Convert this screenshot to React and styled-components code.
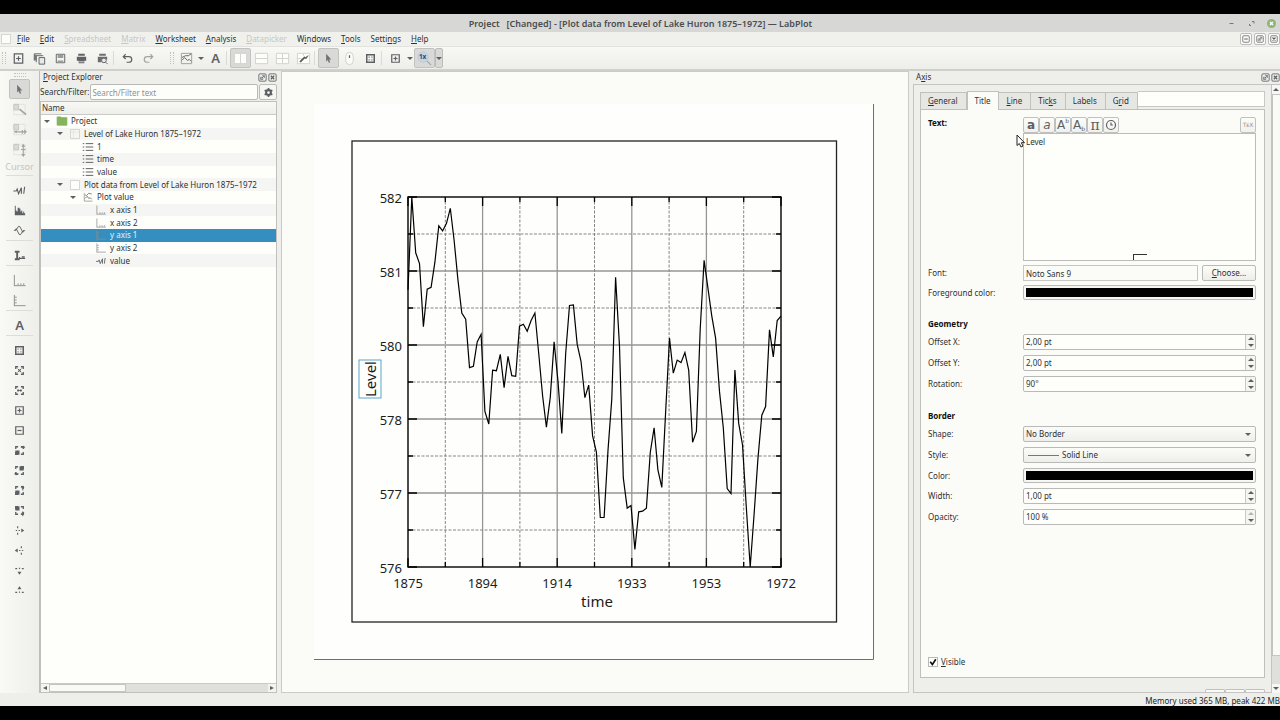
import React from 'react';
import styled, { createGlobalStyle } from 'styled-components';

const LEVELS = [
    580.38, 581.86, 580.97, 580.80, 579.79, 580.39, 580.42, 580.82, 581.40, 581.32,
    581.44, 581.68, 581.17, 580.53, 580.01, 579.91, 579.14, 579.16, 579.55, 579.67,
    578.44, 578.24, 579.10, 579.09, 579.35, 578.82, 579.32, 579.01, 579.00, 579.80,
    579.83, 579.72, 579.89, 580.01, 579.37, 578.69, 578.19, 578.67, 579.55, 578.92,
    578.09, 579.37, 580.13, 580.14, 579.51, 579.24, 578.66, 578.86, 578.05, 577.79,
    576.75, 576.75, 577.82, 578.64, 580.58, 579.48, 577.38, 576.90, 576.94, 576.24,
    576.84, 576.85, 576.90, 577.79, 578.18, 577.51, 577.23, 578.42, 579.61, 579.05,
    579.26, 579.22, 579.38, 579.10, 577.95, 578.12, 579.75, 580.85, 580.41, 579.96,
    579.61, 578.76, 578.18, 577.21, 577.13, 579.10, 578.25, 577.91, 576.89, 575.96,
    576.80, 577.68, 578.38, 578.52, 579.74, 579.31, 579.89, 579.96,
];

// the second field is the position of the mnemonic letter
const MENUS = [
    ['File', 0], ['Edit', 0], ['Spreadsheet', 0, true], ['Matrix', 0, true],
    ['Worksheet', 0], ['Analysis', 0], ['Datapicker', 0, true], ['Windows', 1],
    ['Tools', 0], ['Settings', 5], ['Help', 0],
];

const TREE = [
    { depth: 0, icon: 'folder', label: 'Project', open: true },
    { depth: 1, icon: 'sheet', label: 'Level of Lake Huron 1875–1972', open: true },
    { depth: 2, icon: 'list', label: '1' },
    { depth: 2, icon: 'list', label: 'time' },
    { depth: 2, icon: 'list', label: 'value' },
    { depth: 1, icon: 'page', label: 'Plot data from Level of Lake Huron 1875–1972', open: true },
    { depth: 2, icon: 'plot', label: 'Plot value', open: true },
    { depth: 3, icon: 'xaxis', label: 'x axis 1' },
    { depth: 3, icon: 'xaxis', label: 'x axis 2' },
    { depth: 3, icon: 'yaxis', label: 'y axis 1', selected: true },
    { depth: 3, icon: 'yaxis', label: 'y axis 2' },
    { depth: 3, icon: 'curve', label: 'value' },
];

const frame = <path d="M4 4h8v8H4z" fill="none" strokeWidth="1.300" />;
const corners = <path d="M4 6.500V4h2.500M9.500 4H12v2.500M12 9.500V12H9.500M6.500 12H4V9.500" fill="none" strokeWidth="1.400" />;
const pageFrame = <path d="M1.500 2.500h13v11h-13z" fill="#fdfefa" stroke="#d0d1ce" />;
const ghostPlot = <path d="M2 2.500h5v6H2z" fill="#d9dad7" stroke="#c4c5c2" />;
const dotFrame = <path d="M2 2.500h12v11H2z" fill="none" stroke="#cfd0cd" strokeDasharray="1 1" />;

const ICONS = {
    newDoc: <><path d="M3.500 3h9v10h-9z" fill="none" strokeWidth="1.300" /><path d="M8 5.500v5M5.500 8h5" strokeWidth="1.300" /></>,
    copies: <><path d="M2.500 10V3H10M4.500 12V5H12" fill="none" /><path d="M7.500 7h6v7h-6z" fill="#e8e9e6" /><path d="M2 4h3v6H2z" fill="#75777a" stroke="none" /></>,
    save: <><path d="M3.500 3.500h9v9h-9z" fill="none" /><path d="M5 4h6v3.500H5zM5 10h6v2.500H5z" fill="#9a9c9a" stroke="none" /></>,
    print: <><path d="M4.500 3h7v2h-7zM3 6h10v4.500H3zM5 9.500h6V13H5z" fill="#606264" stroke="none" /><path d="M5.500 11.500h5" stroke="#d8d9d6" /></>,
    preview: <><path d="M4.500 3h7v2h-7zM3 6h10v3H3zM3 9h4v3H3z" fill="#6b6d6f" stroke="none" /><circle cx="9.500" cy="10" r="2.500" fill="#e8e9e6" /><path d="M11.500 12l2 2" /></>,
    undo: <path d="M6 3.500L3.500 6 6 8.500M3.500 6H9.500a3 3 0 0 1 0 6H7" fill="none" strokeWidth="1.300" />,
    redo: <path d="M10 3.500L12.500 6 10 8.500M12.500 6H6.500a3 3 0 0 0 0 6H9" fill="none" strokeWidth="1.300" stroke="#a3a5a3" />,
    plot: <><path d="M3 2.500v11M3 13.500h11" stroke="#8c8e8c" /><path d="M4 10l3-3 2 3 2-1 2 2M4 5l2 1 3-3 4 1" fill="none" /></>,
    plotBox: <><path d="M2.500 2.500h11v11h-11z" fill="none" stroke="#9c9e9c" /><path d="M3 10l3-3 3 3 2-1 2 2M3 7l4-2h3l3-2" fill="none" /></>,
    cols: <>{pageFrame}<path d="M8 3v10" stroke="#d0d1ce" /></>,
    rows: <>{pageFrame}<path d="M2 8h12" stroke="#d0d1ce" /></>,
    grid: <>{pageFrame}<path d="M2 8h12M8 3v10" stroke="#d0d1ce" /></>,
    breakGrid: <>{pageFrame}<path d="M2 8h4M8 3v2" stroke="#d0d1ce" /><path d="M4 11l5-5 1 1 3-2-2 3-2 0-4 4z" fill="#55585a" strokeWidth=".7" /></>,
    arrow: <path d="M5.500 3l5.500 6H8.600l1.200 3-1.400.6-1.300-3-1.600 1.500z" fill="#707274" stroke="none" />,
    mouse: <><rect x="4" y="1.500" width="8" height="13" rx="4" fill="#fbfcf8" stroke="#d0d1ce" /><path d="M8 4.500v3" strokeWidth="1.300" /></>,
    fit: <><path d="M4 4h8v8H4z" fill="none" strokeWidth="1.600" /><path d="M6 6.500h1M9 6.500h1M6 9.500h1M9 9.500h1" strokeWidth="1.200" /></>,
    plus: <>{frame}<path d="M8 5.800v4.400M5.800 8h4.400" strokeWidth="1.300" /></>,
    minus: <>{frame}<path d="M5.800 8h4.400" strokeWidth="1.300" /></>,
    zoom: <><circle cx="6.500" cy="6.500" r="5.500" fill="#c4d5e6" stroke="#b5c4d2" strokeWidth=".7" /><path d="M10.500 10.500l4.500 4.500" stroke="#a5a7a5" strokeWidth="1.300" /><text x="2" y="9" fontSize="7" fontWeight="700" fill="#2b4a78" stroke="none">1x</text></>,
    ghostLine: <>{dotFrame}{ghostPlot}<path d="M8 7.500l7 6" stroke="#a2a4a2" strokeWidth="1.800" /></>,
    ghostX: <>{dotFrame}{ghostPlot}<path d="M3 10.500h12M11 8.500v4M5 9.500l-2 1 2 1M13 8.500l2 2-2 2" fill="none" stroke="#a2a4a2" strokeWidth="1.200" /></>,
    ghostY: <>{dotFrame}{ghostPlot}<path d="M12 2.500V15M9.500 8h5M10.500 5L12 3l1.500 2M10.500 13l1.500 2 1.500-2" fill="none" stroke="#a2a4a2" strokeWidth="1.200" /></>,
    curve: <path d="M1.500 8.500h3l1-2 1.500 5 3-6.500v6.500M12.500 11.500l1-7.500" fill="none" strokeWidth="1.200" />,
    histogram: <path d="M3 3v10h11v-2h-1V9h-1v2h-1V8h-1v1H9V6H8v-1H6v4H5V8H4V3z" fill="#5d6062" stroke="none" />,
    fitCurve: <path d="M2.500 8h1.500L7 3.500 8.500 4l3 6 2-2H12L9 12.500 7.500 12l-3-6-2 2" fill="none" strokeWidth="1" />,
    legend: <><path d="M3 4h5M5.500 4v8M3 12h5" strokeWidth="2" /><path d="M8 9.500v2.500M8 11h6M10.500 9.500h3" strokeWidth="1.200" /></>,
    xaxis: <path d="M2.500 2v12M2.500 13.500h12M6.500 11v2M9.500 11v2M12.500 11v2" stroke="#8c8e8c" />,
    yaxis: <path d="M2.500 2v12M2.500 13.500h12M3 4.500h2M3 7.500h2M3 10.500h2" stroke="#8c8e8c" />,
    auto: <>{corners}<path d="M6 6l4 4M10 6l-4 4" /><path d="M7 7h2v2H7z" fill="#5d6062" stroke="none" /></>,
    autoX: <>{corners}<path d="M5.500 8h5M6.500 6.500v3M9.500 6.500v3" /></>,
    shiftUpRight: <>{corners}<path d="M3.500 8H8v4.500H3.500z" fill="#5d6062" stroke="none" /><path d="M9.500 4.500H14M12.500 3v3" /></>,
    shiftRight: <>{corners}<path d="M8 3.500h4.500V8H8z" fill="#5d6062" stroke="none" /><path d="M2.500 11.500H7M4.500 10v3" /></>,
    shiftUp: <>{corners}<path d="M3.500 8H8v4.500H3.500z" fill="#5d6062" stroke="none" /><path d="M11.500 3v5M10 5h3" /></>,
    shiftDown: <>{corners}<path d="M3.500 3.500H8V8H3.500z" fill="#5d6062" stroke="none" /><path d="M11.500 9v5M10 11h3" /></>,
    dotsRight: <path d="M6 3.500v2M6 10.500v2M4 8h1.500M7 8h1.500M10.500 7l1.500 1-1.500 1z" fill="none" strokeWidth="1.200" />,
    dotsLeft: <path d="M10 3.500v2M10 10.500v2M12 8h-1.500M9 8h-1.500M5.500 7L4 8l1.500 1z" fill="none" strokeWidth="1.200" />,
    dotsDown: <path d="M3.500 6h2M10.500 6h2M8 5v1.500M7 10l1 1.500 1-1.500z" fill="none" strokeWidth="1.200" />,
    dotsUp: <path d="M3.500 10h2M10.500 10h2M8 9v1.500M7 6l1-1.500L9 6z" fill="none" strokeWidth="1.200" />,
    folder: <path d="M1.500 4V2.500h5L7.500 3.500h7v10h-13z" fill="#84b45c" stroke="#7cab57" />,
    sheet: <><path d="M2 2h12v12H2z" fill="#f5f6f2" stroke="#c9cac7" /><path d="M3 5.500h10M6 3v10" stroke="#e2e3df" /></>,
    page: <path d="M2 2h12v12H2z" fill="#fdfefa" stroke="#c9cac7" />,
    list: <><path d="M5 3.500h10M5 8h10M5 12.500h10" strokeWidth="1.300" /><path d="M1 3.500h2M1 8h2M1 12.500h2" strokeWidth="1.300" /></>,
    gear: <><circle cx="8" cy="8" r="3.500" fill="none" strokeWidth="3" /><path d="M8 1.500v3M8 11.500v3M2.400 4.800l2.600 1.500M11 9.700l2.600 1.500M2.400 11.200L5 9.700M11 6.300l2.600-1.500" strokeWidth="2.400" /></>,
    clock: <><circle cx="8" cy="8" r="6" fill="none" strokeWidth="1.600" /><path d="M8 4.500V8h2.500" fill="none" strokeWidth="1.600" /></>,
    float: <><rect x="1.500" y="1.500" width="13" height="13" rx="2" fill="none" strokeWidth="1.500" /><path d="M4.500 7.500h4v4h-4zM7.500 4.500h4v4M6 10l5-5" fill="none" strokeWidth="1.200" /></>,
    close: <><rect x="1.500" y="1.500" width="13" height="13" rx="2" fill="none" strokeWidth="1.500" /><path d="M5 5l6 6M11 5l-6 6" strokeWidth="2.200" /></>,
    collapse: <><rect x="1.500" y="1.500" width="13" height="13" rx="2" fill="none" strokeWidth="1.500" /><path d="M4.500 8h7" strokeWidth="2" /></>,
    tick: <path d="M3.500 7.500l3.500 4.500L12.500 3.500" fill="none" stroke="#111" strokeWidth="2.600" />,
};

function Icon({ name, size = 15 }) {
    return (
        <svg width={size} height={size} viewBox="0 0 16 16" stroke="#5d6062" aria-hidden="true">
            {ICONS[name]}
        </svg>
    );
}

const PLOT = { left: 94, top: 93, width: 373, height: 370 };

function Chart() {
    const { left, top, width, height } = PLOT;
    const right = left + width;
    const bottom = top + height;
    const px = i => left + (i / 10) * width;
    const py = i => top + (i / 10) * height;
    const points = LEVELS.map((v, i) => {
        const x = left + (i / (LEVELS.length - 1)) * width;
        const y = top + ((581.86 - v) / 5.9) * height;
        return `${x.toFixed(1)},${y.toFixed(1)}`;
    }).join(' ');
    const steps = [0, 1, 2, 3, 4, 5, 6, 7, 8, 9, 10];

    return (
        <Worksheet viewBox="0 0 560 556" role="img" aria-label="Level of Lake Huron over time">
            <path d="M559.500 0v555.500H0" fill="none" stroke="#6e6f6d" />
            <rect x="38" y="37" width="484.500" height="481" fill="none" stroke="#222" strokeWidth="1.300" />
            {steps.slice(1, 10).map(i => (
                <g key={i} stroke={i % 2 ? '#868785' : '#969795'} strokeWidth={i % 2 ? 1 : 1.3} strokeDasharray={i % 2 ? '3 1.500' : undefined}>
                    <line x1={px(i)} x2={px(i)} y1={top} y2={bottom} />
                    <line x1={left} x2={right} y1={py(i)} y2={py(i)} />
                </g>
            ))}
            {steps.map(i => {
                const len = i % 2 ? 5 : 9;
                return (
                    <path
                        key={i}
                        stroke="#000"
                        strokeWidth="1.300"
                        d={`M${px(i)} ${top}v${len}M${px(i)} ${bottom}v-${len}M${left} ${py(i)}h${len}M${right} ${py(i)}h-${len}`}
                    />
                );
            })}
            <rect x={left} y={top} width={width} height={height} fill="none" stroke="#000" strokeWidth="1.400" />
            <polyline points={points} fill="none" stroke="#000" strokeWidth="1.200" />
            {[582, 581, 580, 578, 577, 576].map((label, i) => (
                <text key={label} x="88" y={py(i * 2) + 6} textAnchor="end" fontSize="13">{label}</text>
            ))}
            {[1875, 1894, 1914, 1933, 1953, 1972].map((label, i) => (
                <text key={label} x={px(i * 2)} y="484" textAnchor="middle" fontSize="13">{label}</text>
            ))}
            <text x="283" y="503" textAnchor="middle" fontSize="15">time</text>
            <rect x="45" y="256" width="22" height="38" fill="none" stroke="#58a5cc" />
            <text x="62" y="293" fontSize="15" transform="rotate(-90 62 293)">Level</text>
        </Worksheet>
    );
}

function MenuLabel({ text, at }) {
    return <>{text.slice(0, at)}<u>{text[at]}</u>{text.slice(at + 1)}</>;
}

function Spin({ id, label, value, maxed }) {
    return (
        <Row>
            <label htmlFor={id}>{label}</label>
            <SpinBox>
                <input id={id} defaultValue={value} />
                <SpinButtons>
                    <button aria-label={`Increase ${label}`} disabled={maxed}><Triangle $up $dim={maxed} /></button>
                    <button aria-label={`Decrease ${label}`}><Triangle /></button>
                </SpinButtons>
            </SpinBox>
        </Row>
    );
}

function DockTitle({ text, at }) {
    return (
        <DockHeader>
            <span><MenuLabel text={text} at={at} /></span>
            <DockButtons>
                <button aria-label="Float"><Icon name="float" size={9} /></button>
                <button aria-label="Close"><Icon name="close" size={9} /></button>
            </DockButtons>
        </DockHeader>
    );
}

const SIDE_GROUPS = [
    ['curve', 'histogram', 'fitCurve'],
    ['legend'],
    ['xaxis', 'yaxis'],
    ['text'],
    ['fit', 'auto', 'autoX', 'plus', 'minus', 'shiftUpRight', 'shiftRight', 'shiftUp', 'shiftDown', 'dotsRight', 'dotsLeft', 'dotsDown', 'dotsUp'],
];

function Tool({ name, active }) {
    return (
        <ToolButton aria-label={name} $active={active}>
            {name === 'text' ? <BigLetter>A</BigLetter> : <Icon name={name} />}
        </ToolButton>
    );
}

export default function App() {
    const [visible, setVisible] = React.useState(true);

    return (
        <Screen>
            <GlobalStyle />
            <TitleBar>
                <h1>Project &nbsp; [Changed] - [Plot data from Level of Lake Huron 1875–1972] — LabPlot</h1>
                <WindowButtons>
                    <button aria-label="Minimize"><svg width="9" height="9" viewBox="0 0 9 9"><path d="M2.500 4.500h4" stroke="#777" /></svg></button>
                    <button aria-label="Restore"><svg width="9" height="9" viewBox="0 0 9 9"><path d="M5 2.500h2v2M4 6.500H2.500V5" stroke="#777" fill="none" /></svg></button>
                    <button aria-label="Close window"><svg width="9" height="9" viewBox="0 0 9 9"><circle cx="4.500" cy="4.500" r="4.500" fill="#8fb573" /><path d="M3 3l3 3M6 3L3 6" stroke="#fff" strokeWidth="1.300" /></svg></button>
                </WindowButtons>
            </TitleBar>

            <MenuBar>
                <Icon name="page" size={12} />
                {MENUS.map(([text, at, off]) => (
                    <button key={text} disabled={off}><MenuLabel text={text} at={at} /></button>
                ))}
                <MdiButtons>
                    <button aria-label="Minimize worksheet"><Icon name="collapse" size={8} /></button>
                    <button aria-label="Restore worksheet"><Icon name="float" size={8} /></button>
                    <button aria-label="Close worksheet"><Icon name="close" size={8} /></button>
                </MdiButtons>
            </MenuBar>

            <ToolBar>
                <Grip />
                {['newDoc', 'copies', 'save', 'print', 'preview'].map(n => <Tool key={n} name={n} />)}
                <Divider />
                <Tool name="undo" />
                <Tool name="redo" />
                <Spacer />
                <Grip />
                <Tool name="plotBox" />
                <DropButton aria-label="More plots"><Triangle /></DropButton>
                <Tool name="text" />
                <Divider />
                <Tool name="cols" active />
                <Tool name="rows" />
                <Tool name="grid" />
                <Tool name="breakGrid" />
                <Divider />
                <Tool name="arrow" active />
                <Tool name="mouse" />
                <Tool name="fit" />
                <Divider />
                <Tool name="plus" />
                <DropButton aria-label="Zoom options"><Triangle /></DropButton>
                <Tool name="zoom" active />
                <DropButton aria-label="Magnification" $active><Triangle /></DropButton>
            </ToolBar>

            <Main>
                <SideBar>
                    <SideGrip />
                    <Tool name="arrow" active />
                    <Tool name="ghostLine" />
                    <Tool name="ghostX" />
                    <Tool name="ghostY" />
                    <CursorLabel disabled>Cursor</CursorLabel>
                    {SIDE_GROUPS.map(group => (
                        <SideGroup key={group[0]}>
                            {group.map(n => <Tool key={n} name={n} />)}
                        </SideGroup>
                    ))}
                </SideBar>

                <Explorer>
                    <DockTitle text="Project Explorer" at={0} />
                    <SearchRow>
                        <label htmlFor="search">Search/Filter:</label>
                        <input id="search" placeholder="Search/Filter text" />
                        <button aria-label="Search options"><Icon name="gear" size={11} /></button>
                    </SearchRow>
                    <TreeBox>
                        <TreeHeader>Name</TreeHeader>
                        <Tree role="tree" aria-label="Project">
                            {TREE.map((node, i) => (
                                <TreeItem key={i} role="treeitem" aria-selected={!!node.selected} $depth={node.depth} $odd={i % 2 === 1} $selected={node.selected}>
                                    <Expander>{node.open && <Triangle />}</Expander>
                                    <Icon name={node.icon} size={12} />
                                    <span>{node.label}</span>
                                </TreeItem>
                            ))}
                        </Tree>
                        <HScroll>
                            <Triangle $side="left" />
                            <HTrough><HThumb /></HTrough>
                            <Triangle $side="right" />
                        </HScroll>
                    </TreeBox>
                </Explorer>

                <MdiArea>
                    <Chart />
                </MdiArea>

                <Dock>
                    <DockTitle text="Axis" at={1} />
                    <DockBody>
                        <DockFrame>
                            <TabBar role="tablist">
                                <Tab role="tab"><u>G</u>eneral</Tab>
                                <Tab role="tab" $active aria-selected="true">Title</Tab>
                                <Tab role="tab"><u>L</u>ine</Tab>
                                <Tab role="tab">Tic<u>k</u>s</Tab>
                                <Tab role="tab">Labels</Tab>
                                <Tab role="tab">G<u>r</u>id</Tab>
                                <TabFill />
                            </TabBar>
                            <Pane>
                                <TextRow>
                                    <Heading as="label" htmlFor="title-text">Text:</Heading>
                                    <div>
                                        <FormatBar>
                                            <FormatButton aria-label="Bold">a</FormatButton>
                                            <FormatButton aria-label="Italic" $light><i>a</i></FormatButton>
                                            <FormatButton aria-label="Superscript" $light>A<sup>b</sup></FormatButton>
                                            <FormatButton aria-label="Subscript" $light>A<sub>b</sub></FormatButton>
                                            <FormatButton aria-label="Symbols" $serif $light>π</FormatButton>
                                            <FormatButton aria-label="Date and time"><Icon name="clock" size={12} /></FormatButton>
                                            <TexButton>TᴇX</TexButton>
                                        </FormatBar>
                                        <EditorBox>
                                            <textarea id="title-text" defaultValue="Level" />
                                            <DropMark />
                                            <Pointer width="10" height="14" viewBox="0 0 10 14">
                                                <path d="M1 1v10.500l2.300-2 1.700 3.500 2-1-1.700-3.300H8.500z" fill="#fff" stroke="#222" />
                                            </Pointer>
                                        </EditorBox>
                                    </div>
                                </TextRow>
                                <Section $tight>
                                    <Row>
                                        <label htmlFor="font">Font:</label>
                                        <FontPicker>
                                            <ReadOnlyInput id="font" readOnly value="Noto Sans 9" />
                                            <PushButton><u>C</u>hoose...</PushButton>
                                        </FontPicker>
                                    </Row>
                                    <Row $short>
                                        <label htmlFor="fg">Foreground color:</label>
                                        <ColorButton id="fg"><span /></ColorButton>
                                    </Row>
                                </Section>
                                <Section>
                                    <Heading>Geometry</Heading>
                                    <Spin id="offx" label="Offset X:" value="2,00 pt" />
                                    <Spin id="offy" label="Offset Y:" value="2,00 pt" />
                                    <Spin id="rot" label="Rotation:" value="90°" />
                                </Section>
                                <Section>
                                    <Heading>Border</Heading>
                                    <Row>
                                        <label htmlFor="shape">Shape:</label>
                                        <SelectBox>
                                            <select id="shape"><option>No Border</option></select>
                                            <Triangle />
                                        </SelectBox>
                                    </Row>
                                    <Row>
                                        <label htmlFor="style">Style:</label>
                                        <SelectBox>
                                            <LineSample />
                                            <select id="style"><option>Solid Line</option></select>
                                            <Triangle />
                                        </SelectBox>
                                    </Row>
                                    <Row $short>
                                        <label htmlFor="color">Color:</label>
                                        <ColorButton id="color"><span /></ColorButton>
                                    </Row>
                                    <Spin id="width" label="Width:" value="1,00 pt" />
                                    <Spin id="opacity" label="Opacity:" value="100 %" maxed />
                                </Section>
                                <Visible>
                                    <CheckBox>
                                        <input type="checkbox" checked={visible} onChange={e => setVisible(e.target.checked)} />
                                        {visible && <Icon name="tick" size={10} />}
                                    </CheckBox>
                                    <span><u>V</u>isible</span>
                                </Visible>
                            </Pane>
                            <TemplateButtons>
                                <button aria-label="Load template" />
                                <button aria-label="Save template" />
                                <button aria-label="Save default" />
                            </TemplateButtons>
                        </DockFrame>
                        <VScroll>
                            <ScrollEnd><Triangle $up /></ScrollEnd>
                            <VThumb />
                            <VTrough />
                            <ScrollEnd><Triangle /></ScrollEnd>
                        </VScroll>
                    </DockBody>
                </Dock>
            </Main>
            <StatusBar>Memory used 365 MB, peak 422 MB</StatusBar>
        </Screen>
    );
}

const GlobalStyle = createGlobalStyle`
    * {
        box-sizing: border-box;
    }
    body {
        margin: 0;
        background: #000;
        color: #2e3133;
        font: 8px/12px "Noto Sans", sans-serif;
    }
    button, input, select, textarea {
        margin: 0;
        padding: 0;
        border: 0;
        background: none;
        color: inherit;
        font: inherit;
    }
    u {
        text-underline-offset: 1px;
    }
    svg {
        display: block;
        flex: none;
    }
`;

const Screen = styled.div`
    display: flex;
    flex-direction: column;
    min-height: 100vh;
    padding: 14px 0;
    overflow: hidden;
`;

const TitleBar = styled.header`
    display: flex;
    align-items: center;
    justify-content: center;
    height: 18px;
    padding: 1px 0 0 54px;
    background: #d7d8d5;

    h1 {
        flex: 1;
        margin: 0;
        text-align: center;
        font-size: 9px;
        font-weight: 600;
        color: #4a4c4d;
    }
`;

const WindowButtons = styled.div`
    display: flex;
    gap: 11px;
    padding-right: 4px;

    button {
        display: block;
    }
`;

const MenuBar = styled.nav`
    display: flex;
    align-items: center;
    gap: 10px;
    height: 14px;
    background: #f0f1ed;

    > svg {
        margin-right: -5px;
    }
    > button:disabled {
        color: #c6c7c4;
    }
`;

const MdiButtons = styled.div`
    display: flex;
    gap: 2px;
    margin-left: auto;

    button {
        display: grid;
        place-items: center;
        width: 12px;
        height: 12px;
        background: #fafbf7;
        border: 1px solid #bcbdba;
        border-radius: 2px;
    }
`;

const ToolBar = styled.div`
    display: flex;
    align-items: center;
    height: 25px;
    padding-left: 2px;
    background: linear-gradient(#f8f9f4, #edeeea);
    border-top: 1px solid #e2e3df;
    border-bottom: 2px solid #cfd0cc;
`;

const Grip = styled.span`
    width: 4px;
    height: 12px;
    margin-right: 2px;
    border-left: 1px dotted #c0c1be;
    border-right: 1px dotted #c0c1be;
`;

const Spacer = styled.span`
    width: 11px;
`;

const Divider = styled.span`
    width: 2px;
    height: 14px;
    margin-right: 2px;
    border-left: 1px solid #dadbd7;
`;

const ToolButton = styled.button`
    display: grid;
    place-items: center;
    flex: none;
    width: 21px;
    height: 20px;
    border-radius: 2px;
    background: ${props => (props.$active ? '#d9dad7' : 'none')};
    border: 1px solid ${props => (props.$active ? '#c2c3c0' : 'transparent')};
`;

const DropButton = styled.button`
    display: grid;
    place-items: center;
    width: 8px;
    height: 20px;
    border-radius: 2px;
    background: ${props => (props.$active ? '#d9dad7' : 'none')};
    border: ${props => (props.$active ? '1px solid #bcbdba' : '0')};
`;

const BigLetter = styled.b`
    font-size: 13px;
    line-height: 16px;
    font-weight: 600;
    color: #5d6062;
`;

const sideBorder = {
    left: 'border-right: 4px solid #5d6062; border-top: 2px solid transparent; border-bottom: 2px solid transparent;',
    right: 'border-left: 4px solid #5d6062; border-top: 2px solid transparent; border-bottom: 2px solid transparent;',
};

const Triangle = styled.span`
    display: block;
    flex: none;
    width: 0;
    height: 0;
    ${props => sideBorder[props.$side] || `
        border-left: 3px solid transparent;
        border-right: 3px solid transparent;
        border-${props.$up ? 'bottom' : 'top'}: 3px solid ${props.$dim ? '#b5b6b3' : '#5d6062'};
    `}
`;

const Main = styled.main`
    display: flex;
    flex: 1;
    background: #eeefeb;
`;

const SideBar = styled.aside`
    display: flex;
    flex-direction: column;
    align-items: center;
    flex: none;
    width: 40px;
    background: linear-gradient(90deg, #f9faf5, #eeefeb);
    border-right: 1px solid #bdbebb;
`;

const SideGrip = styled.span`
    width: 12px;
    height: 4px;
    margin: 2px 0;
    border-top: 1px dotted #c0c1be;
    border-bottom: 1px dotted #c0c1be;
`;

const CursorLabel = styled.button`
    height: 16px;
    font-size: 9px;
    color: #c3c4c1;
`;

const SideGroup = styled.div`
    display: flex;
    flex-direction: column;
    align-items: center;
    width: 27px;
    padding-top: 4px;
    border-top: 1px solid #dcddd9;
`;

const Explorer = styled.section`
    display: flex;
    flex-direction: column;
    flex: none;
    width: 237px;
`;

const DockHeader = styled.header`
    display: flex;
    align-items: center;
    justify-content: space-between;
    height: 13px;
    padding: 0 0 1px 3px;
`;

const DockButtons = styled.div`
    display: flex;
    gap: 1px;

    button {
        display: block;
    }
`;

const SearchRow = styled.div`
    display: flex;
    align-items: center;
    gap: 1px;
    height: 16px;

    input {
        flex: 1;
        min-width: 0;
        height: 16px;
        padding: 0 1px;
        background: #fdfefa;
        border: 1px solid #b9bab7;
        border-radius: 2px;
    }
    input::placeholder {
        color: #8f918f;
    }
    button {
        display: grid;
        place-items: center;
        width: 18px;
        height: 16px;
        background: #f6f7f3;
        border: 1px solid #bcbdba;
        border-radius: 2px;
    }
`;

const TreeBox = styled.div`
    display: flex;
    flex-direction: column;
    flex: 1;
    margin-top: 1px;
    background: #fefffb;
    border: 1px solid #c0c1be;
`;

const TreeHeader = styled.div`
    height: 13px;
    padding-left: 1px;
    background: linear-gradient(#f8f9f5, #eeefeb);
    border-bottom: 1px solid #c9cac6;
`;

const Tree = styled.ul`
    display: grid;
    grid-auto-rows: 1fr;
    height: 152px;
    margin: 0 0 auto;
    padding: 0;
    list-style: none;
`;

const TreeItem = styled.li`
    display: flex;
    align-items: center;
    gap: 3px;
    padding-left: ${props => props.$depth * 13}px;
    background: ${props => (props.$selected ? '#348fc0' : props.$odd ? '#f5f6f3' : 'none')};
    color: ${props => (props.$selected ? '#e4f2f9' : 'inherit')};
    white-space: nowrap;
`;

const Expander = styled.span`
    display: grid;
    place-items: center;
    width: 12px;
`;

const HScroll = styled.div`
    display: flex;
    align-items: center;
    height: 9px;
    padding: 0 2px;
    background: #f3f4f0;
    border-top: 1px solid #c9cac6;
`;

const HTrough = styled.div`
    flex: 1;
    align-self: stretch;
    margin: 0 2px;
    background: #dfe0dc;
`;

const HThumb = styled.div`
    width: 35%;
    height: 100%;
    background: #f9faf6;
    border: 1px solid #c4c5c2;
`;

const MdiArea = styled.section`
    display: flex;
    align-items: center;
    justify-content: center;
    flex: 1;
    min-width: 0;
    margin: 0 4px;
    padding-right: 2px;
    background: #fbfcf7;
    border: 1px solid #cacbc8;
`;

const Worksheet = styled.svg`
    flex: 0 1 560px;
    min-width: 0;
    background: #fefffc;

    text {
        fill: #1c1c1c;
    }
`;

const Dock = styled.section`
    display: flex;
    flex-direction: column;
    flex: none;
    width: 367px;
`;

const DockBody = styled.div`
    display: flex;
    flex: 1;
`;

const DockFrame = styled.div`
    display: flex;
    flex-direction: column;
    flex: 1;
    padding: 6px 6px 0;
    border: 1px solid #c4c5c2;
`;

const TabBar = styled.div`
    display: flex;
    align-items: flex-end;
    height: 18px;
`;

const Tab = styled.button`
    height: ${props => (props.$active ? 19 : 17)}px;
    margin-bottom: ${props => (props.$active ? -1 : 0)}px;
    padding: 0 8px 0 7px;
    z-index: ${props => (props.$active ? 1 : 0)};
    background: ${props => (props.$active ? '#fbfcf8' : '#e6e7e3')};
    border: 1px solid #c0c1be;
    border-bottom-width: 0;
    border-left-width: ${props => (props.$active ? '1px' : '0')};

    &:first-child {
        border-left-width: 1px;
    }
`;

const TabFill = styled.div`
    flex: 1;
    align-self: flex-start;
    height: 16px;
    background: #fefffb;
    border: 1px solid #c8c9c6;
    border-left: 0;
`;

const Pane = styled.div`
    display: flex;
    flex-direction: column;
    flex: 1;
    padding: 7px 8px 9px 7px;
    background: #fbfcf8;
    border: 1px solid #bfc0bd;
`;

const Row = styled.div`
    display: grid;
    grid-template-columns: 95px 1fr;
    align-items: center;
    height: ${props => (props.$short ? 15 : 16)}px;
`;

const TextRow = styled.div`
    display: grid;
    grid-template-columns: 95px 1fr;
    align-items: start;
`;

const Heading = styled.h2`
    margin: 0;
    font-size: 8px;
    font-weight: 700;
    line-height: 11px;
    color: #111;
`;

const Section = styled.section`
    display: flex;
    flex-direction: column;
    gap: ${props => (props.$tight ? 4 : 5)}px;
    margin-top: ${props => (props.$tight ? 4 : 18)}px;
`;

const FormatBar = styled.div`
    display: flex;
    height: 16px;
`;

const FormatButton = styled.button`
    display: flex;
    align-items: center;
    justify-content: center;
    width: 16px;
    height: 16px;
    background: linear-gradient(#fcfdf9, #f0f1ed);
    border: 1px solid #c0c1be;
    border-radius: 2px;
    color: #5d6062;
    font-family: ${props => (props.$serif ? '"DejaVu Serif", serif' : '"DejaVu Sans", sans-serif')};
    font-size: ${props => (props.$serif ? 14 : 12)}px;
    font-weight: ${props => (props.$light ? 400 : 700)};
    line-height: 12px;

    sup, sub {
        font-size: 6px;
        line-height: 6px;
    }
    sup {
        align-self: flex-start;
    }
    sub {
        align-self: flex-end;
    }
`;

const TexButton = styled(FormatButton)`
    margin-left: auto;
    font-size: 6px;
    font-weight: 400;
    color: #949694;
`;

const EditorBox = styled.div`
    position: relative;
    display: flex;
    height: 128px;

    textarea {
        flex: 1;
        padding: 2px;
        background: #fefffb;
        border: 1px solid #bcbdba;
        resize: none;
    }
`;

const DropMark = styled.span`
    position: absolute;
    left: 110px;
    bottom: 1px;
    width: 14px;
    height: 6px;
    border-top: 1px solid #333;
    border-left: 1px solid #333;
`;

const Pointer = styled.svg`
    position: absolute;
    left: -7px;
    top: 1px;
`;

const FontPicker = styled.div`
    display: flex;
    gap: 4px;
`;

const ReadOnlyInput = styled.input`
    flex: 1;
    min-width: 0;
    height: 16px;
    padding: 0 2px;
    border: 1px solid #c6c7c4;
`;

const PushButton = styled.button`
    width: 54px;
    height: 16px;
    background: linear-gradient(#fcfdf9, #edeeea);
    border: 1px solid #b9bab7;
    border-radius: 2px;
`;

const ColorButton = styled.button`
    display: flex;
    height: 15px;
    padding: 2px;
    background: #f6f7f3;
    border: 1px solid #b9bab7;
    border-radius: 2px;

    span {
        flex: 1;
        background: #000;
    }
`;

const SpinBox = styled.div`
    display: flex;
    height: 16px;
    background: #fefffb;
    border: 1px solid #b9bab7;
    border-radius: 2px;

    input {
        flex: 1;
        min-width: 0;
        padding: 0 2px;
    }
`;

const SpinButtons = styled.div`
    display: grid;
    grid-template-rows: 1fr 1fr;
    width: 10px;
    background: #f4f5f1;
    border-left: 1px solid #c9cac6;

    button {
        display: grid;
        place-items: center;
    }
`;

const SelectBox = styled.div`
    display: flex;
    align-items: center;
    height: 16px;
    padding: 0 4px 0 2px;
    background: linear-gradient(#fbfcf8, #eeefeb);
    border: 1px solid #b9bab7;
    border-radius: 2px;

    select {
        flex: 1;
        appearance: none;
    }
`;

const LineSample = styled.span`
    width: 31px;
    height: 1px;
    margin: 0 3px 0 2px;
    background: #777;
`;

const Visible = styled.label`
    display: flex;
    align-items: center;
    gap: 3px;
    margin-top: auto;
`;

const CheckBox = styled.span`
    display: grid;
    width: 10px;
    height: 10px;

    > * {
        grid-area: 1 / 1;
    }
    input {
        appearance: none;
        background: #fefffb;
        border: 1px solid #b9bab7;
    }
    svg {
        pointer-events: none;
    }
`;

const TemplateButtons = styled.div`
    display: flex;
    justify-content: flex-end;
    height: 14px;
    padding-top: 11px;

    button {
        width: 20px;
        background: #f9faf6;
        border: 1px solid #c0c1be;
        border-bottom: 0;
        border-radius: 2px 2px 0 0;
    }
`;

const VScroll = styled.div`
    display: flex;
    flex-direction: column;
    width: 8px;
    background: #f7f8f4;
    border-top: 1px solid #c4c5c2;
`;

const ScrollEnd = styled.span`
    display: grid;
    place-items: center;
    height: 9px;
`;

const VThumb = styled.div`
    flex: 20;
    background: #fafbf7;
    border: 1px solid #c4c5c2;
    border-right: 0;
`;

const VTrough = styled.div`
    flex: 1;
    background: #dfe0dc;
`;

const StatusBar = styled.footer`
    height: 13px;
    background: #eeefeb;
    color: #1c1e1f;
    text-align: right;
    white-space: nowrap;
    line-height: 15px;
`;
